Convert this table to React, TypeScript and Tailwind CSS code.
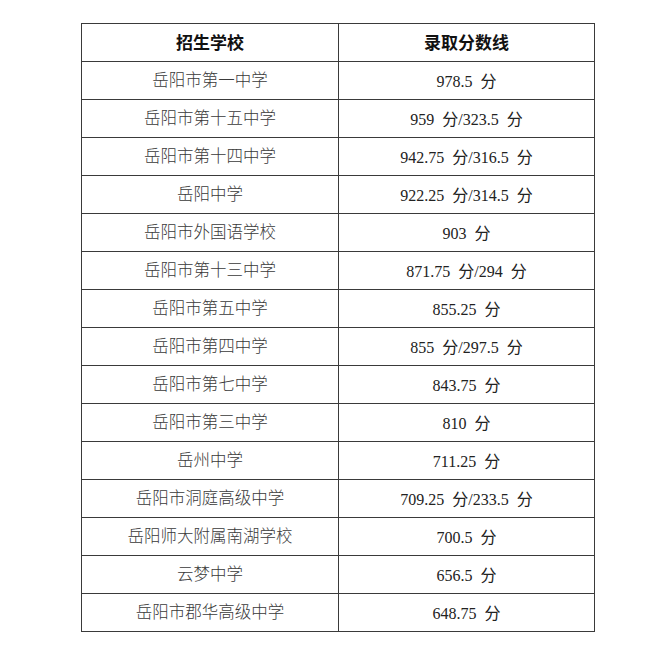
import React from "react";

const rows: [string, string][] = [
  ["岳阳市第一中学", "978.5  分"],
  ["岳阳市第十五中学", "959  分/323.5  分"],
  ["岳阳市第十四中学", "942.75  分/316.5  分"],
  ["岳阳中学", "922.25  分/314.5  分"],
  ["岳阳市外国语学校", "903  分"],
  ["岳阳市第十三中学", "871.75  分/294  分"],
  ["岳阳市第五中学", "855.25  分"],
  ["岳阳市第四中学", "855  分/297.5  分"],
  ["岳阳市第七中学", "843.75  分"],
  ["岳阳市第三中学", "810  分"],
  ["岳州中学", "711.25  分"],
  ["岳阳市洞庭高级中学", "709.25  分/233.5  分"],
  ["岳阳师大附属南湖学校", "700.5  分"],
  ["云梦中学", "656.5  分"],
  ["岳阳市郡华高级中学", "648.75  分"],
];

export default function App() {
  return (
    <div className="min-h-[667px] w-[654px] bg-white pt-[23px] pl-[81px]">
      <table
        className="w-[514px] table-fixed border-collapse text-[16px] text-[#333]"
        style={{ fontFamily: '"Liberation Serif", "Noto Sans CJK SC", serif' }}
      >
        <thead>
          <tr className="h-[38px]">
            <th className="w-[257px] border border-[#3a3a3a] pt-[2px] text-[17px] font-bold text-[#111]">
              招生学校
            </th>
            <th className="border border-[#3a3a3a] pt-[2px] text-[17px] font-bold text-[#111]">
              录取分数线
            </th>
          </tr>
        </thead>
        <tbody>
          {rows.map(([school, score], i) => (
            <tr key={i} className="h-[38px]">
              <td className="border border-[#3a3a3a] pt-[2px] text-center text-[16.5px] font-light text-[#3a3a3a]">
                {school}
              </td>
              <td className="whitespace-pre border border-[#3a3a3a] pt-[2px] text-center text-[#222]">
                {score}
              </td>
            </tr>
          ))}
        </tbody>
      </table>
    </div>
  );
}
